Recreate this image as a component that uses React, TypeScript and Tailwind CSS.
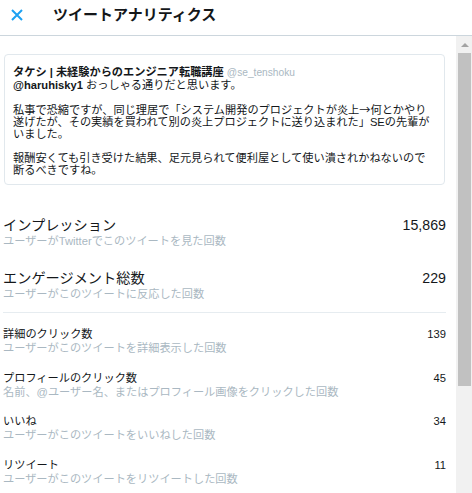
import React from "react";

const FONT = '"Liberation Sans", "Noto Sans CJK JP", sans-serif';
const CJK = '"Noto Sans CJK JP", sans-serif';

type Metric = { label: string; sub: string; value: string };

const bigMetrics: Metric[] = [
  { label: "インプレッション", sub: "ユーザーがTwitterでこのツイートを見た回数", value: "15,869" },
  { label: "エンゲージメント総数", sub: "ユーザーがこのツイートに反応した回数", value: "229" },
];

const smallMetrics: Metric[] = [
  { label: "詳細のクリック数", sub: "ユーザーがこのツイートを詳細表示した回数", value: "139" },
  { label: "プロフィールのクリック数", sub: "名前、@ユーザー名、またはプロフィール画像をクリックした回数", value: "45" },
  { label: "いいね", sub: "ユーザーがこのツイートをいいねした回数", value: "34" },
  { label: "リツイート", sub: "ユーザーがこのツイートをリツイートした回数", value: "11" },
];

function CloseIcon() {
  return (
    <svg width="12" height="12" viewBox="0 0 12 12" fill="none">
      <path d="M1 1L11 11M11 1L1 11" stroke="#1da1f2" strokeWidth="2" strokeLinecap="butt" />
    </svg>
  );
}

function TweetCard() {
  return (
    <div className="mx-[1px] rounded-[4px] border border-[#e1e8ed] pl-[8px] pr-[6px] pt-[11px] pb-[8px] text-[11.2px] leading-[12px] text-[#14171a] whitespace-nowrap">
      <div className="leading-[13px]">
        <span className="font-bold">タケシ | 未経験からのエンジニア転職講座</span>{" "}
        <span className="text-[10.2px] text-[#aab8c2]">@se_tenshoku</span>
      </div>
      <div>
        <span className="font-bold">@haruhisky1</span> おっしゃる通りだと思います。
      </div>
      <div className="h-[12px]" />
      <div>
        私事で恐縮ですが、同じ理居で「システム開発のプロジェクトが炎上
        <span style={{ fontFamily: CJK }}>→</span>何とかやり
      </div>
      <div>遂げたが、その実績を買われて別の炎上プロジェクトに送り込まれた」SEの先輩が</div>
      <div>いました。</div>
      <div className="h-[12px]" />
      <div>報酬安くても引き受けた結果、足元見られて便利屋として使い潰されかねないので</div>
      <div>断るべきですね。</div>
    </div>
  );
}

function Scrollbar() {
  return (
    <div className="flex w-[16px] shrink-0 flex-col bg-[#f1f1f1]">
      <div className="flex h-[17px] items-center justify-center pl-[1px]">
        <div className="h-0 w-0 border-x-[4px] border-b-[4px] border-x-transparent border-b-[#a3a3a3]" />
      </div>
      <div className="ml-[2px] h-[333px] w-[13px] bg-[#c1c1c1]" />
    </div>
  );
}

export default function App() {
  return (
    <div className="flex h-[493px] w-[472px] flex-col overflow-hidden bg-white" style={{ fontFamily: FONT }}>
      <header className="flex h-[36px] shrink-0 items-center border-b border-[#ccd6dd] pb-[6px]">
        <div className="ml-[11px] flex h-[12px] w-[12px] items-center">
          <CloseIcon />
        </div>
        <h1 className="ml-[30px] text-[15px] font-bold leading-[18px] text-[#14171a]">ツイートアナリティクス</h1>
      </header>

      <div className="flex min-h-0 flex-1">
        <main className="flex-1 pl-[3px] pr-[10px] pt-[18px]">
          <TweetCard />

          <div className="mt-[32px] flex flex-col gap-[22px]">
            {bigMetrics.map((m) => (
              <div key={m.label}>
                <div className="flex items-center justify-between text-[14.2px] leading-[17px] text-[#14171a]">
                  <span>{m.label}</span>
                  <span>{m.value}</span>
                </div>
                <div className="text-[11.2px] leading-[14px] text-[#aab8c2]">{m.sub}</div>
              </div>
            ))}
          </div>

          <div className="mt-[11px] h-px bg-[#e6ecf0]" />

          <div className="mt-[14px] flex flex-col gap-[14.5px]">
            {smallMetrics.map((m) => (
              <div key={m.label}>
                <div className="flex items-center justify-between text-[11.2px] leading-[14px] text-[#14171a]">
                  <span>{m.label}</span>
                  <span>{m.value}</span>
                </div>
                <div className="text-[11.2px] leading-[15px] text-[#aab8c2]">{m.sub}</div>
              </div>
            ))}
          </div>
        </main>
        <Scrollbar />
      </div>
    </div>
  );
}
